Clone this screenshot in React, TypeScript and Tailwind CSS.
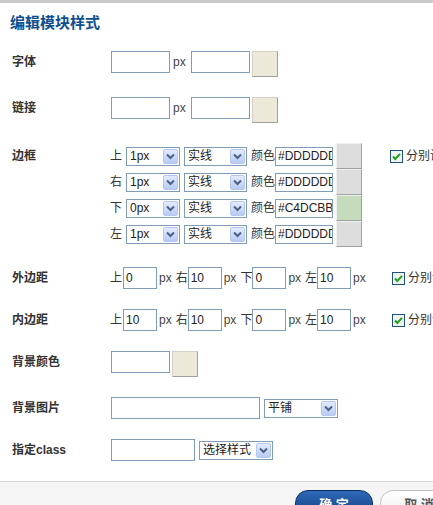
import React from 'react';

const arrow = (
  <svg width="9" height="7" viewBox="0 0 9 7">
    <path d="M1 1.5 L4.5 5 L8 1.5" fill="none" stroke="#4d6185" strokeWidth="2" />
  </svg>
);

function XpSelect({ value, className }: { value: string; className: string }) {
  return (
    <div className={`flex h-[19px] items-center justify-between border border-[#7f9db9] bg-white pl-[3px] pr-[1px] ${className}`}>
      <span className="leading-none text-[#222]">{value}</span>
      <span className="flex h-[15px] w-[15px] items-center justify-center rounded-[2px] border border-[#b6c7ee] bg-linear-to-b from-[#e3ebfe] to-[#b8cbf6]">
        {arrow}
      </span>
    </div>
  );
}

function TextBox({ value = '', className }: { value?: string; className: string }) {
  return (
    <div className={`overflow-hidden whitespace-nowrap border border-[#7f9db9] bg-white pl-[2px] text-[#222] ${className}`}>
      {value}
    </div>
  );
}

function Swatch({ className = '' }: { className?: string }) {
  return <div className={`h-[26px] w-[26px] border border-[#d4d0c8] border-r-[#a0a0a0] border-b-[#a0a0a0] bg-[#ece9d8] ${className}`} />;
}

function Check({ label }: { label: string }) {
  return (
    <div className="flex items-center gap-[3px] whitespace-nowrap">
      <svg width="13" height="13" viewBox="0 0 13 13">
        <rect x="0.5" y="0.5" width="12" height="12" fill="#f2f2ef" stroke="#1c5180" />
        <path d="M3 6.5 L5.3 9 L10 3.8" fill="none" stroke="#21a121" strokeWidth="2" />
      </svg>
      <span className="text-[#333]">{label}</span>
    </div>
  );
}

function Label({ children, h = 'h-[22px] leading-[22px]' }: { children: React.ReactNode; h?: string }) {
  return <div className={`w-[98px] shrink-0 font-bold text-[#333] ${h}`}>{children}</div>;
}

const borders = [
  { side: '上', width: '1px', color: '#DDDDDD', swatch: 'bg-[#dddddd]' },
  { side: '右', width: '1px', color: '#DDDDDD', swatch: 'bg-[#dddddd]' },
  { side: '下', width: '0px', color: '#C4DCBB', swatch: 'bg-[#c4dcbb]' },
  { side: '左', width: '1px', color: '#DDDDDD', swatch: 'bg-[#dddddd]' },
];

function SpacingRow({ label, values }: { label: string; values: string[] }) {
  const sides = ['上', '右', '下', '左'];
  return (
    <div className="mt-5 flex items-start">
      <Label>{label}</Label>
      <div className="flex h-[22px] w-[282px] items-center">
        {sides.map((s, i) => (
          <React.Fragment key={s}>
            <span className={i === 0 ? 'w-[13px]' : 'ml-[4px] w-[12px]'}>{s}</span>
            <TextBox value={values[i]} className="h-[22px] w-[34px] leading-[20px]" />
            <span className="ml-[2px] text-[#444]">px</span>
          </React.Fragment>
        ))}
      </div>
      <div className="flex h-[22px] items-center">
        <Check label="分别设置" />
      </div>
    </div>
  );
}

export default function App() {
  return (
    <div className="relative flex h-[505px] w-[433px] flex-col overflow-hidden bg-white font-['Liberation_Sans','Noto_Sans_CJK_SC',sans-serif] text-[12px] text-[#333]">
      <div className="h-[3px] shrink-0 bg-[#c9c9c9]" />
      <div className="flex h-[40px] shrink-0 items-center pl-[10px] text-[15px] font-bold text-[#0f4f8e]">编辑模块样式</div>

      <div className="flex h-[438px] w-[520px] shrink-0 flex-col px-[12px] pt-[8px]">
        {/* 字体 */}
        <div className="flex items-start">
          <Label>字体</Label>
          <TextBox className="ml-[1px] h-[22px] w-[59px]" />
          <span className="ml-[3px] mr-[5px] leading-[22px] text-[#444]">px</span>
          <TextBox className="h-[22px] w-[59px]" />
          <Swatch className="ml-[2px]" />
        </div>

        {/* 链接 */}
        <div className="mt-5 flex items-start">
          <Label>链接</Label>
          <TextBox className="ml-[1px] h-[22px] w-[59px]" />
          <span className="ml-[3px] mr-[5px] leading-[22px] text-[#444]">px</span>
          <TextBox className="h-[22px] w-[59px]" />
          <Swatch className="ml-[2px]" />
        </div>

        {/* 边框 */}
        <div className="mt-5 flex items-start">
          <Label h="h-[26px] leading-[26px]">边框</Label>
          <div className="flex flex-col">
            {borders.map((b) => (
              <div key={b.side} className="flex h-[26px] items-center">
                <span className="w-[16px]">{b.side}</span>
                <XpSelect value={b.width} className="w-[54px]" />
                <XpSelect value="实线" className="ml-[4px] w-[63px]" />
                <span className="ml-[4px] w-[24px]">颜色</span>
                <TextBox value={b.color} className="h-[19px] w-[58px] leading-[17px]" />
                <div className={`ml-[3px] h-[26px] w-[26px] border border-[#f0f0f0] border-r-[#a0a0a0] border-b-[#a0a0a0] ${b.swatch}`} />
              </div>
            ))}
          </div>
          <div className="ml-[28px] flex h-[26px] items-center">
            <Check label="分别设置" />
          </div>
        </div>

        <SpacingRow label="外边距" values={['0', '10', '0', '10']} />
        <SpacingRow label="内边距" values={['10', '10', '0', '10']} />

        {/* 背景颜色 */}
        <div className="mt-5 flex items-start">
          <Label>背景颜色</Label>
          <TextBox className="ml-[1px] h-[22px] w-[59px]" />
          <Swatch className="ml-[2px]" />
        </div>

        {/* 背景图片 */}
        <div className="mt-5 flex items-center">
          <Label>背景图片</Label>
          <TextBox className="ml-[1px] h-[22px] w-[149px]" />
          <XpSelect value="平铺" className="ml-[4px] w-[74px]" />
        </div>

        {/* 指定class */}
        <div className="mt-5 flex items-center">
          <Label>指定class</Label>
          <TextBox className="ml-[1px] h-[22px] w-[84px]" />
          <XpSelect value="选择样式" className="ml-[4px] w-[74px]" />
        </div>
      </div>

      <div className="flex h-[40px] w-[600px] shrink-0 gap-[7px] border-t border-[#d6d6d6] bg-[#f5f5f5] pl-[295px] pt-[8px]">
        <button className="h-[30px] w-[78px] rounded-[13px] border border-[#0a2f66] bg-linear-to-b from-[#2f69b8] to-[#0d3b7c] text-[13px] font-bold text-white">
          确 定
        </button>
        <button className="h-[30px] w-[78px] rounded-[13px] border border-[#c4c4c4] bg-linear-to-b from-white to-[#ececec] text-[13px] font-bold text-[#555]">
          取 消
        </button>
      </div>
    </div>
  );
}
